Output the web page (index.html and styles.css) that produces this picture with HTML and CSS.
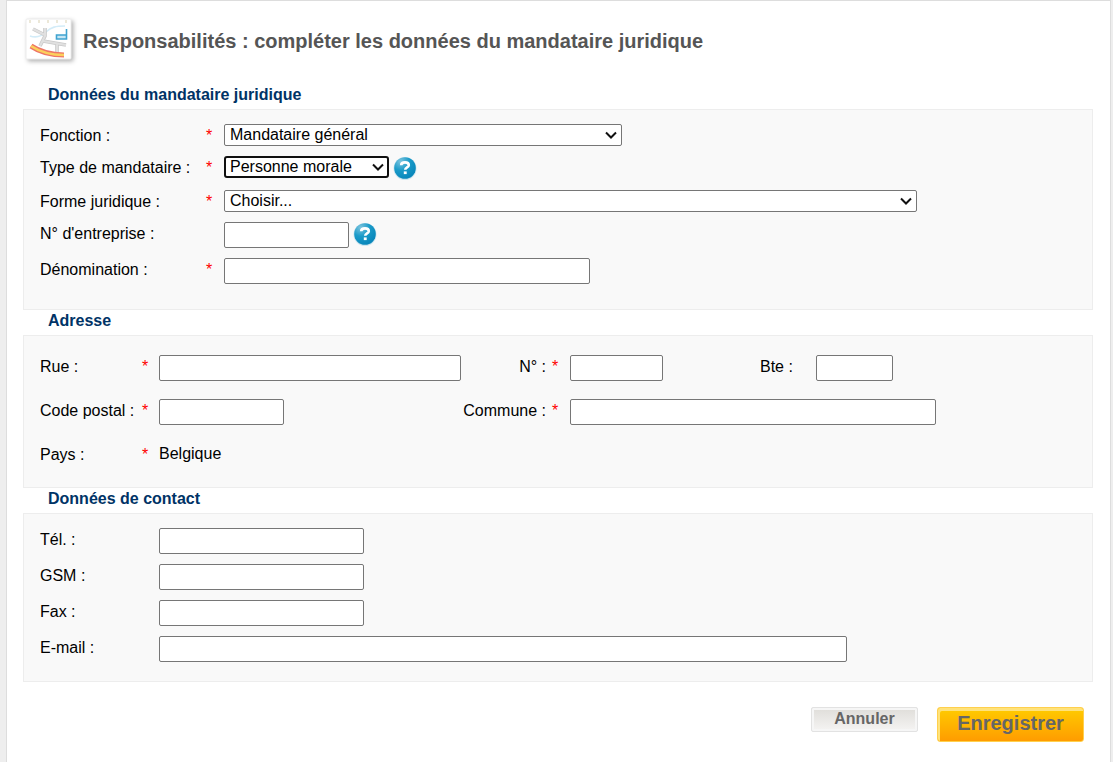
FILE: index.html
```html
<!DOCTYPE html>
<html lang="fr">
<head>
    <meta charset="UTF-8">
    <meta name="viewport" content="width=device-width, initial-scale=1.0">
    <title>Responsabilités : mandataire juridique</title>
    <link rel="stylesheet" href="styles.css">
</head>
<body>

    <svg width="0" height="0" class="defs" aria-hidden="true">
        <defs>
            <radialGradient id="helpFill" cx="0.3" cy="0.2" r="0.9">
                <stop offset="0" stop-color="#7cc4de"/>
                <stop offset="0.45" stop-color="#1b9bc9"/>
                <stop offset="1" stop-color="#0583b8"/>
            </radialGradient>
            <symbol id="helpIcon" viewBox="0 0 24 24">
                <circle cx="12" cy="12.5" r="11.5" fill="#cfe6ef"/>
                <circle cx="12" cy="12" r="10.8" fill="url(#helpFill)"/>
                <path d="M8.2 9.2C8.2 7.2 9.8 6.4 12 6.4s3.8 1 3.8 2.8c0 2.2-3.6 2.3-3.6 4.6" fill="none" stroke="#fff" stroke-width="2.6"/>
                <rect x="10.8" y="15.4" width="2.9" height="2.7" fill="#fff"/>
            </symbol>
        </defs>
    </svg>

    <main class="page">
        <header class="page-header">
            <svg class="page-icon" viewBox="0 0 54 50" aria-hidden="true">
                <rect x="3" y="2" width="45" height="40" rx="1" fill="#fff" stroke="#ececec"/>
                <path d="M7 3v3M16 3v3M25 3v3M34 3v3M43 3v3" stroke="#ece8d8" stroke-width="2"/>
                <path d="M7 19C13 21 18 20 23 15S33 9 42 9" fill="none" stroke="#d3ecf8" stroke-width="1.6"/>
                <path d="M10 12L22 18M22 11V19L17 29M20 24L43 28M34 27V35" fill="none" stroke="#c9c9c9" stroke-width="3.6"/>
                <path d="M10 12L22 18M22 11V19L17 29M20 24L43 28M34 27V35" fill="none" stroke="#e0e0e0" stroke-width="2"/>
                <path d="M33.5 18H43.5V22H33.5ZM43.5 12V22" fill="#c5e6f4" stroke="#3fa3d0" stroke-width="1.6"/>
                <path d="M8 29C17 35 27 38 41 38" fill="none" stroke="#ee7566" stroke-width="5.2"/>
                <path d="M8 29C17 35 27 38 41 38" fill="none" stroke="#fbd05c" stroke-width="2.6"/>
            </svg>
            <h1>Responsabilités : compléter les données du mandataire juridique</h1>
        </header>

        <form>
            <h2>Données du mandataire juridique</h2>
            <div class="panel panel-mandataire">
                <div class="row">
                    <label for="fonction">Fonction :</label>
                    <span class="required">*</span>
                    <select id="fonction" class="w-fonction"><option>Mandataire général</option></select>
                </div>
                <div class="row">
                    <label for="type">Type de mandataire :</label>
                    <span class="required">*</span>
                    <div class="with-help">
                        <select id="type" class="w-type current"><option>Personne morale</option></select>
                        <svg class="help" role="img" aria-label="Aide"><use href="#helpIcon"/></svg>
                    </div>
                </div>
                <div class="row">
                    <label for="forme">Forme juridique :</label>
                    <span class="required">*</span>
                    <select id="forme" class="w-forme"><option>Choisir...</option></select>
                </div>
                <div class="row">
                    <label for="entreprise">N° d'entreprise :</label>
                    <span></span>
                    <div class="with-help">
                        <input type="text" id="entreprise" class="w-code">
                        <svg class="help" role="img" aria-label="Aide"><use href="#helpIcon"/></svg>
                    </div>
                </div>
                <div class="row">
                    <label for="denomination">Dénomination :</label>
                    <span class="required">*</span>
                    <input type="text" id="denomination" class="w-long">
                </div>
            </div>

            <h2>Adresse</h2>
            <div class="panel panel-adresse">
                <div class="row">
                    <label for="rue">Rue :</label>
                    <span class="required">*</span>
                    <input type="text" id="rue">
                    <label for="numero" class="label-right">N° :</label>
                    <span class="required">*</span>
                    <input type="text" id="numero" class="w-numero">
                    <label for="boite">Bte :</label>
                    <input type="text" id="boite">
                </div>
                <div class="row">
                    <label for="codePostal">Code postal :</label>
                    <span class="required">*</span>
                    <input type="text" id="codePostal" class="w-code">
                    <label for="commune" class="label-right">Commune :</label>
                    <span class="required">*</span>
                    <input type="text" id="commune" class="w-long commune">
                </div>
                <div class="row">
                    <span class="name">Pays :</span>
                    <span class="required">*</span>
                    <span>Belgique</span>
                </div>
            </div>

            <h2>Données de contact</h2>
            <div class="panel panel-contact">
                <div class="row">
                    <label for="tel">Tél. :</label>
                    <input type="tel" id="tel" class="w-tel">
                </div>
                <div class="row">
                    <label for="gsm">GSM :</label>
                    <input type="tel" id="gsm" class="w-tel">
                </div>
                <div class="row">
                    <label for="fax">Fax :</label>
                    <input type="tel" id="fax" class="w-tel">
                </div>
                <div class="row">
                    <label for="email">E-mail :</label>
                    <input type="email" id="email" class="w-email">
                </div>
            </div>

            <div class="actions">
                <button type="button" class="btn-cancel">Annuler</button>
                <button type="submit" class="btn-save">Enregistrer</button>
            </div>
        </form>
    </main>

</body>
</html>
```
FILE: styles.css
```css
* {
    box-sizing: border-box;
    margin: 0;
    padding: 0;
}

body {
    background-color: #eee;
    color: #000;
    font-family: Arial, "Liberation Sans", sans-serif;
    font-size: 16px;
    line-height: 22px;
}

.defs {
    position: absolute;
}

.page {
    min-height: 100vh;
    margin: 0 2px 0 6px;
    padding: 16px 17px 20px 16px;
    background-color: #fff;
    border: 1px solid #ddd;
    border-bottom: 0;
}

.page-header {
    display: flex;
    align-items: center;
    gap: 6px;
    height: 50px;
    margin-bottom: 17px;
}

.page-icon {
    width: 54px;
    height: 50px;
    filter: drop-shadow(2px 2px 2px rgba(0, 0, 0, 0.3));
}

h1 {
    padding-bottom: 2px;
    color: #555;
    font-size: 20px;
    line-height: 24px;
}

h2 {
    padding: 0 0 3px 25px;
    color: #036;
    font-size: 16px;
}

/* Panels */
.panel {
    display: flex;
    flex-direction: column;
    gap: 10px;
    background-color: #f9f9f9;
    border: 1px solid #ededed;
}

.panel-mandataire {
    padding: 14px 16px 25px;
}

.panel-adresse {
    gap: 18px;
    padding: 19px 16px 18px;
}

.panel-contact {
    padding: 14px 16px 19px;
}

.row {
    display: grid;
    align-items: start;
    justify-items: start;
}

.panel-mandataire .row {
    grid-template-columns: 166px 18px 1fr;
}

.panel-adresse .row {
    grid-template-columns: 102px 17px 302px 91px 18px 190px 56px 77px;
    min-height: 26px;
}

.panel-contact .row {
    grid-template-columns: 119px 1fr;
}

label,
.name,
.required {
    height: 22px;
    line-height: 24px;
}

.label-right {
    justify-self: end;
    padding-right: 6px;
}

.required {
    color: #f00;
}

/* Fields */
input,
select {
    width: 100%;
    background-color: #fff;
    border: 1px solid #767676;
    border-radius: 2px;
    color: #000;
    font: inherit;
}

input {
    height: 26px;
    padding: 0 4px;
}

select {
    height: 22px;
    padding: 0 20px 0 5px;
    line-height: 18px;
    appearance: none;
    background-image: url("data:image/svg+xml,%3Csvg xmlns='http://www.w3.org/2000/svg' width='12' height='8'%3E%3Cpath d='M1 1.5L6 6.5L11 1.5' fill='none' stroke='%23101010' stroke-width='2'/%3E%3C/svg%3E");
    background-repeat: no-repeat;
    background-position: right 4px center;
}

select.current {
    padding-left: 4px;
    border: 2px solid #101010;
    border-radius: 3px;
    background-position: right 3px center;
}

.with-help {
    display: flex;
    gap: 4px;
}

.help {
    width: 24px;
    height: 24px;
}

.w-fonction { width: 398px; }
.w-type { width: 165px; }
.w-forme { width: 693px; }
.w-code { width: 125px; }
.w-long { width: 366px; }
.w-numero { width: 93px; }
.w-tel { width: 205px; }
.w-email { width: 688px; }

.commune {
    grid-column: 6 / -1;
}

/* Buttons */
.actions {
    display: flex;
    justify-content: flex-end;
    align-items: flex-start;
    gap: 19px;
    padding: 25px 9px 0 0;
}

.btn-cancel,
.btn-save {
    color: #666;
    font-family: inherit;
    font-weight: bold;
    cursor: pointer;
}

.btn-cancel {
    width: 107px;
    height: 25px;
    padding-bottom: 2px;
    background: linear-gradient(#dfddd9, #f5f4f3);
    border: 1px solid #e2e2e2;
    border-radius: 2px;
    box-shadow: inset 0 0 0 2px #f6f6f6;
    font-size: 16px;
}

.btn-save {
    width: 147px;
    height: 35px;
    padding-bottom: 3px;
    background: linear-gradient(#fc0, #ff9c00);
    border: 1px solid #ffd04d;
    border-radius: 3px;
    box-shadow: inset 2px 3px 0 #ffe27a;
    font-size: 20px;
}
```
